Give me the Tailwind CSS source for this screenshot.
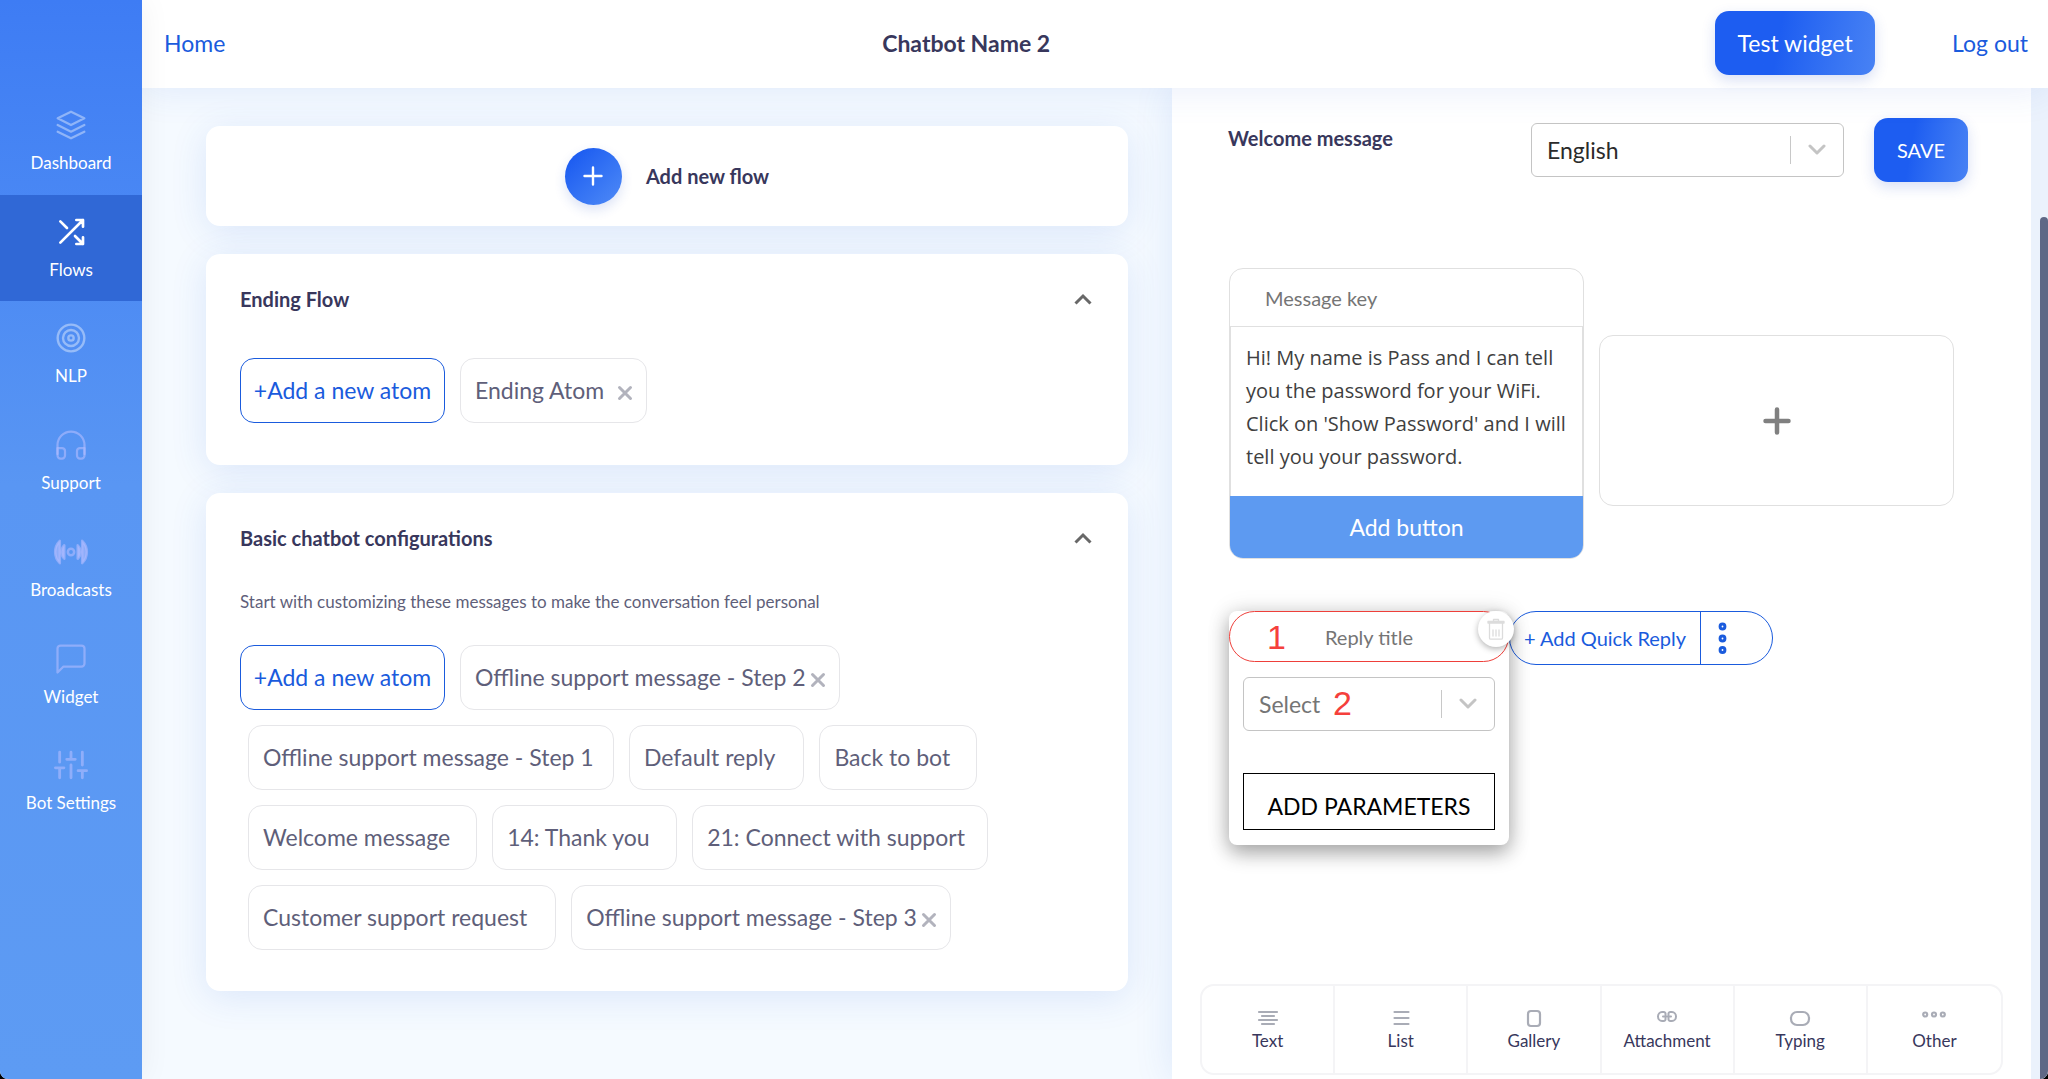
<!DOCTYPE html>
<html lang="en">
<head>
<meta charset="utf-8">
<title>Chatbot Name 2</title>
<script src="https://cdn.jsdelivr.net/npm/@tailwindcss/browser@4"></script>
</head>
<body class="bg-black font-['Lato',sans-serif] text-[23px] text-[#5f5f7a]">
<div class="flex min-h-screen overflow-hidden rounded-b-lg bg-[#f5faff]">

  <!-- Sidebar -->
  <aside class="relative z-20 w-[142px] shrink-0 bg-linear-to-b from-[#3e7cf4] via-[#5996f3] via-45% to-[#5d9bf3] pt-[88px] shadow-[0_0_30px_rgba(0,0,0,0.06)]">
    <nav class="flex h-[747px] flex-col text-[17px] leading-6 text-white" aria-label="Main">
      <a href="#" class="flex flex-1 flex-col items-center gap-[7px] pt-[18px]">
        <span class="flex h-[38px] items-center text-white/40"><svg class="size-8" viewBox="0 0 24 24" fill="none" stroke="currentColor" stroke-width="1.7" stroke-linecap="round" stroke-linejoin="round"><path d="M12 2 2 7l10 5 10-5-10-5zM2 17l10 5 10-5M2 12l10 5 10-5"/></svg></span>Dashboard</a>
      <a href="#" aria-current="page" class="flex flex-1 flex-col items-center gap-[7px] bg-[#3068d6] pt-[18px]">
        <span class="flex h-[38px] items-center"><svg class="size-8" viewBox="0 0 24 24" fill="none" stroke="currentColor" stroke-width="2" stroke-linecap="round" stroke-linejoin="round"><path d="M16 3h5v5M4 20 21 3M21 16v5h-5M15 15l6 6M4 4l5 5"/></svg></span>Flows</a>
      <a href="#" class="flex flex-1 flex-col items-center gap-[7px] pt-[18px]">
        <span class="flex h-[38px] items-center text-white/40"><svg class="size-8" viewBox="0 0 24 24" fill="none" stroke="currentColor" stroke-width="1.8"><circle cx="12" cy="12" r="10"/><circle cx="12" cy="12" r="6"/><circle cx="12" cy="12" r="2"/></svg></span>NLP</a>
      <a href="#" class="flex flex-1 flex-col items-center gap-[7px] pt-[18px]">
        <span class="flex h-[38px] items-center text-[#b3bdff]/60"><svg class="size-9" viewBox="0 0 24 24" fill="none" stroke="currentColor" stroke-width="1.500" stroke-linecap="round" stroke-linejoin="round"><path d="M3 18v-6a9 9 0 0 1 18 0v6"/><path d="M21 19a2 2 0 0 1-2 2h-1a2 2 0 0 1-2-2v-3a2 2 0 0 1 2-2h3zM3 19a2 2 0 0 0 2 2h1a2 2 0 0 0 2-2v-3a2 2 0 0 0-2-2H3z"/></svg></span>Support</a>
      <a href="#" class="flex flex-1 flex-col items-center gap-[7px] pt-[18px]">
        <span class="flex h-[38px] items-center text-[#b3bdff]/60"><svg class="size-[38px]" viewBox="0 0 24 24" fill="none" stroke="currentColor" stroke-width="1.6" stroke-linecap="round" stroke-linejoin="round"><circle cx="12" cy="12" r="2"/><path fill="currentColor" d="M16.240 7.760a6 6 0 0 1 0 8.490z"/><path fill="currentColor" d="M7.760 16.240a6 6 0 0 1 0-8.490z"/><path fill="currentColor" d="M19.070 4.930a10 10 0 0 1 0 14.140z"/><path fill="currentColor" d="M4.930 19.070a10 10 0 0 1 0-14.140z"/></svg></span>Broadcasts</a>
      <a href="#" class="flex flex-1 flex-col items-center gap-[7px] pt-[18px]">
        <span class="flex h-[38px] items-center text-[#b3bdff]/60"><svg class="size-9" viewBox="0 0 24 24" fill="none" stroke="currentColor" stroke-width="1.500" stroke-linecap="round" stroke-linejoin="round"><path d="M21 15a2 2 0 0 1-2 2H7l-4 4V5a2 2 0 0 1 2-2h14a2 2 0 0 1 2 2z"/></svg></span>Widget</a>
      <a href="#" class="flex flex-1 flex-col items-center gap-[7px] pt-[18px]">
        <span class="flex h-[38px] items-center text-[#b3bdff]/60"><svg class="size-[34px]" viewBox="0 0 24 24" fill="none" stroke="currentColor" stroke-width="2" stroke-linecap="round" stroke-linejoin="round"><path d="M4 21v-7M4 10V3M12 21v-9M12 8V3M20 21v-5M20 12V3M1 14h6M9 8h6M17 16h6"/></svg></span>Bot Settings</a>
    </nav>
  </aside>

  <div class="flex min-w-0 flex-1 flex-col">
    <!-- Top bar -->
    <header class="relative z-10 flex h-[88px] items-center justify-between bg-white pr-5 pb-[2px] pl-[22px] shadow-[0_4px_36px_rgba(50,100,220,0.10)]">
      <a href="#" class="text-[#1a5bdd]">Home</a>
      <h1 class="pr-2 font-bold text-[#38375c]">Chatbot Name 2</h1>
      <div class="flex items-center gap-[77px]">
        <button class="h-16 w-[160px] rounded-[14px] bg-linear-100 from-[#1d5df1] from-40% to-[#4882f4] text-white shadow-[0_5px_14px_rgba(40,80,200,0.18)]">Test widget</button>
        <a href="#" class="text-[#1a5bdd]">Log out</a>
      </div>
    </header>

    <div class="grid flex-1 grid-cols-[1030fr_859fr_17px]">

      <!-- Flow list -->
      <main class="flex flex-col gap-7 pt-[38px] pr-11 pl-16">
        <section class="flex h-[100px] items-center justify-center gap-6 rounded-[14px] bg-white shadow-[0_6px_36px_rgba(50,100,220,0.13)]">
          <button aria-label="Add new flow" class="flex size-[57px] items-center justify-center rounded-full bg-linear-to-br from-[#1d5df1] from-15% to-[#4f8af6] text-white shadow-[0_5px_12px_rgba(40,80,200,0.16)]">
            <svg class="size-6" viewBox="0 0 24 24" stroke="currentColor" stroke-width="2.400" stroke-linecap="round"><path d="M12 3.500v17M3.500 12h17"/></svg>
          </button>
          <span class="text-xl font-bold text-[#38375c]">Add new flow</span>
        </section>

        <section class="rounded-[14px] bg-white px-[34px] pt-[30px] pb-[42px] shadow-[0_6px_36px_rgba(50,100,220,0.13)]">
          <div class="flex h-[30px] items-center justify-between">
            <h2 class="text-xl font-bold text-[#38375c]">Ending Flow</h2>
            <button aria-label="Collapse" class="px-[2px] text-[#686868]"><svg class="h-3 w-[18px]" viewBox="0 0 18 12" fill="none" stroke="currentColor" stroke-width="3"><path d="m1.500 10.500 7.500-7.500 7.500 7.500"/></svg></button>
          </div>
          <div class="mt-11 flex flex-wrap gap-y-[15px]">
            <button class="mr-[7px] h-[65px] w-[205px] rounded-[14px] border border-[#1a5bdd] text-[#1a5bdd]">+Add a new atom</button>
            <div class="mr-[7px] ml-2 flex h-[65px] w-[187px] items-center justify-between rounded-[14px] border border-[#e6e6e9] pr-[13px] pl-[14px]">Ending Atom<button aria-label="Remove" class="pt-1 text-[#b2b3bd]"><svg class="size-4" viewBox="0 0 16 16" stroke="currentColor" stroke-width="3" stroke-linecap="round"><path d="m2.500 2.500 11 11M13.500 2.500l-11 11"/></svg></button></div>
          </div>
        </section>

        <section class="rounded-[14px] bg-white px-[34px] pt-[30px] pb-[41px] shadow-[0_6px_36px_rgba(50,100,220,0.13)]">
          <div class="flex h-[30px] items-center justify-between">
            <h2 class="text-xl font-bold text-[#38375c]">Basic chatbot configurations</h2>
            <button aria-label="Collapse" class="px-[2px] text-[#686868]"><svg class="h-3 w-[18px]" viewBox="0 0 18 12" fill="none" stroke="currentColor" stroke-width="3"><path d="m1.500 10.500 7.500-7.500 7.500 7.500"/></svg></button>
          </div>
          <p class="mt-[37px] text-[17px] leading-6">Start with customizing these messages to make the conversation feel personal</p>
          <div class="mt-[31px] flex flex-wrap gap-y-[15px]">
            <button class="mr-[7px] h-[65px] w-[205px] rounded-[14px] border border-[#1a5bdd] text-[#1a5bdd]">+Add a new atom</button>
            <div class="mr-[7px] ml-2 flex h-[65px] w-[380px] items-center justify-between rounded-[14px] border border-[#e6e6e9] pr-[13px] pl-[14px]">Offline support message - Step 2<button aria-label="Remove" class="pt-1 text-[#b2b3bd]"><svg class="size-4" viewBox="0 0 16 16" stroke="currentColor" stroke-width="3" stroke-linecap="round"><path d="m2.500 2.500 11 11M13.500 2.500l-11 11"/></svg></button></div>
            <button class="mr-[7px] ml-2 h-[65px] w-[366px] rounded-[14px] border border-[#e6e6e9] pl-[14px] text-left">Offline support message - Step 1</button>
            <button class="mr-[7px] ml-2 h-[65px] rounded-[14px] border border-[#e6e6e9] pr-7 pl-[14px]">Default reply</button>
            <button class="mr-[7px] ml-2 h-[65px] rounded-[14px] border border-[#e6e6e9] pr-[26px] pl-[14px]">Back to bot</button>
            <button class="mr-[7px] ml-2 h-[65px] rounded-[14px] border border-[#e6e6e9] pr-[26px] pl-[14px]">Welcome message</button>
            <button class="mr-[7px] ml-2 h-[65px] w-[185px] rounded-[14px] border border-[#e6e6e9] pl-[14px] text-left">14: Thank you</button>
            <button class="mr-[7px] ml-2 h-[65px] w-[296px] rounded-[14px] border border-[#e6e6e9] pl-[14px] text-left">21: Connect with support</button>
            <button class="mr-[7px] ml-2 h-[65px] rounded-[14px] border border-[#e6e6e9] pr-7 pl-[14px]">Customer support request</button>
            <div class="mr-[7px] ml-2 flex h-[65px] w-[380px] items-center justify-between rounded-[14px] border border-[#e6e6e9] pr-[13px] pl-[14px]">Offline support message - Step 3<button aria-label="Remove" class="pt-1 text-[#b2b3bd]"><svg class="size-4" viewBox="0 0 16 16" stroke="currentColor" stroke-width="3" stroke-linecap="round"><path d="m2.500 2.500 11 11M13.500 2.500l-11 11"/></svg></button></div>
          </div>
        </section>
      </main>

      <!-- Message editor -->
      <section class="flex flex-col bg-white pt-[30px] shadow-[0_0_36px_rgba(50,100,220,0.13)]">
        <div class="flex h-16 items-center pr-[63px] pl-14">
          <h2 class="flex-1 self-start text-xl leading-10 font-bold text-[#38375c]">Welcome message</h2>
          <div class="flex h-[54px] w-[313px] items-center rounded-md border border-[#c4c4c4] bg-white">
            <select aria-label="Language" class="h-full min-w-0 flex-1 appearance-none bg-transparent pl-[15px] text-[#2b2b2b]"><option>English</option></select>
            <span class="h-7 w-px bg-[#c8c8c8]"></span>
            <svg class="mx-[17px] h-3 w-[18px] text-[#c4c4c4]" viewBox="0 0 18 12" fill="none" stroke="currentColor" stroke-width="3" stroke-linecap="round" stroke-linejoin="round"><path d="m2 2 7 7 7-7"/></svg>
          </div>
          <button class="ml-[30px] h-16 w-[94px] rounded-[14px] bg-linear-100 from-[#1d5df1] from-40% to-[#4882f4] text-xl text-white shadow-[0_5px_14px_rgba(40,80,200,0.18)]">SAVE</button>
        </div>

        <div class="mt-[86px] flex items-start gap-[15px] pl-[57px]">
          <div class="flex w-[355px] flex-col overflow-hidden rounded-[14px] border border-[#e0e0e0]">
            <input aria-label="Message key" placeholder="Message key" class="h-[57px] pl-[35px] text-xl text-[#444] placeholder:text-[#757575]">
            <textarea aria-label="Message text" class="h-[170px] resize-none overflow-hidden border border-b-0 border-[#e0e0e0] pt-[14px] pl-[15px] font-['Open_Sans',sans-serif] text-xl leading-[33px] text-[#404040]">Hi! My name is Pass and I can tell you the password for your WiFi. Click on 'Show Password' and I will tell you your password.</textarea>
            <button class="h-[62px] bg-[#5d9af1] text-white">Add button</button>
          </div>
          <button aria-label="Add message" class="mt-[67px] flex h-[171px] w-[355px] items-center justify-center rounded-[14px] border border-[#e0e0e0] text-[#808080]">
            <svg class="size-7" viewBox="0 0 28 28" stroke="currentColor" stroke-width="4.500" stroke-linecap="round"><path d="M14 2.500v23M2.500 14h23"/></svg>
          </button>
        </div>

        <div class="mt-[52px] flex items-start pl-[57px]">
          <div class="relative w-[280px] rounded-lg bg-white pb-[15px] shadow-[0_8px_20px_rgba(0,0,0,0.32),0_0_24px_rgba(0,0,0,0.10)]">
            <input aria-label="Reply title" placeholder="Reply title" class="block h-[51px] w-full rounded-full border border-[#ee3f3a] bg-white text-center text-xl placeholder:text-[#757575]">
            <span class="absolute top-[7px] left-[38px] font-['Liberation_Sans',sans-serif] text-[34px] leading-[38px] text-[#f5403c]">1</span>
            <button aria-label="Delete reply" class="absolute top-0 -right-[5px] flex size-9 items-center justify-center rounded-full bg-white text-[#dcdcdc] shadow-[0_2px_6px_rgba(0,0,0,0.3)]">
              <svg class="h-[22px] w-[18px]" viewBox="0 0 18 22" fill="none" stroke="currentColor" stroke-width="1.300" stroke-linecap="round" stroke-linejoin="round"><path d="M1 5h16v-1.500H1zM6.500 3.500V1.500h5v2M2.500 5v15a1.200 1.200 0 0 0 1.200 1.200h10.600a1.200 1.200 0 0 0 1.200-1.200V5M6 12v6M9 12v6M12 12v6"/></svg>
            </button>
            <div class="mx-[14px] mt-[15px] flex h-[54px] items-center rounded-md border border-[#c4c4c4]">
              <select aria-label="Target" class="h-full min-w-0 flex-1 appearance-none bg-transparent pl-[15px] text-[#757575]"><option>Select</option></select>
              <span class="h-7 w-px bg-[#c8c8c8]"></span>
              <svg class="mx-[17px] h-3 w-[18px] text-[#c4c4c4]" viewBox="0 0 18 12" fill="none" stroke="currentColor" stroke-width="3" stroke-linecap="round" stroke-linejoin="round"><path d="m2 2 7 7 7-7"/></svg>
            </div>
            <span class="absolute top-[73px] left-[104px] font-['Liberation_Sans',sans-serif] text-[34px] leading-[38px] text-[#f5403c]">2</span>
            <button class="mx-[14px] mt-[42px] block h-[57px] w-[252px] border border-black pt-[10px] text-black">ADD PARAMETERS</button>
          </div>
          <div class="flex h-[54px] w-[264px] rounded-full border border-[#1a5bdd] text-[#1a5bdd]">
            <button class="w-[190px] text-xl">+ Add Quick Reply</button>
            <button aria-label="More options" class="flex-1 border-l border-[#1a5bdd] pl-[17px]">
              <svg class="h-8 w-[9px]" viewBox="0 0 9 32" fill="none" stroke="currentColor" stroke-width="3"><circle cx="4.500" cy="4.500" r="2.400"/><circle cx="4.500" cy="16.500" r="2.400"/><circle cx="4.500" cy="28" r="2.400"/></svg>
            </button>
          </div>
        </div>

        <!-- Message types -->
        <div class="mx-7 mt-auto mb-1 grid h-[91px] grid-cols-6 divide-x-2 divide-[#f4f4f6] overflow-hidden rounded-[14px] border-2 border-[#f4f4f6] text-[17px] leading-6 text-[#38375c]">
          <button class="flex flex-col items-center pt-[23px]"><svg class="h-5 w-6 text-[#a9acb6]" viewBox="0 0 24 20" fill="none" stroke="currentColor" stroke-width="2.200" stroke-linecap="round"><path d="M3 3h18M6 7h12M3 11h18M6 15h12"/></svg>Text</button>
          <button class="flex flex-col items-center pt-[23px]"><svg class="h-5 w-6 text-[#a9acb6]" viewBox="0 0 24 20" fill="none" stroke="currentColor" stroke-width="2.200" stroke-linecap="round"><path d="M5.500 3h14M5.500 9h14M5.500 15h14"/></svg>List</button>
          <button class="flex flex-col items-center pt-[23px]"><svg class="h-5 w-6 text-[#a9acb6]" viewBox="0 0 24 20" fill="none" stroke="currentColor" stroke-width="2.200"><rect x="6" y="2" width="12" height="15" rx="3"/></svg>Gallery</button>
          <button class="flex flex-col items-center pt-[23px]"><svg class="h-5 w-6 text-[#a9acb6]" viewBox="0 0 24 20" fill="none" stroke="currentColor" stroke-width="2" stroke-linecap="round"><path d="M8 7.500h8M10.500 6V5.500a2 2 0 0 0-2-2.500H7a4 4.500 0 0 0 0 9h1.500a2 2 0 0 0 2-2.500V9M13.500 6V5.500a2 2 0 0 1 2-2.500H17a4 4.500 0 0 1 0 9h-1.500a2 2 0 0 1-2-2.500V9"/></svg>Attachment</button>
          <button class="flex flex-col items-center pt-[23px]"><svg class="h-5 w-6 text-[#a9acb6]" viewBox="0 0 24 20" fill="none" stroke="currentColor" stroke-width="2.200"><rect x="3" y="3" width="18" height="13" rx="6"/></svg>Typing</button>
          <button class="flex flex-col items-center pt-[23px]"><svg class="h-5 w-6 text-[#a9acb6]" viewBox="0 0 24 20" fill="none" stroke="currentColor" stroke-width="2.200"><circle cx="3.200" cy="5.500" r="2"/><circle cx="12" cy="5.500" r="2"/><circle cx="20.800" cy="5.500" r="2"/></svg>Other</button>
        </div>
      </section>

      <!-- Scroll track -->
      <div class="flex justify-end bg-[#ebf2fc] pt-[129px]"><div class="w-2 rounded-t-full bg-[#5f6886]"></div></div>
    </div>
  </div>
</div>
</body>
</html>
